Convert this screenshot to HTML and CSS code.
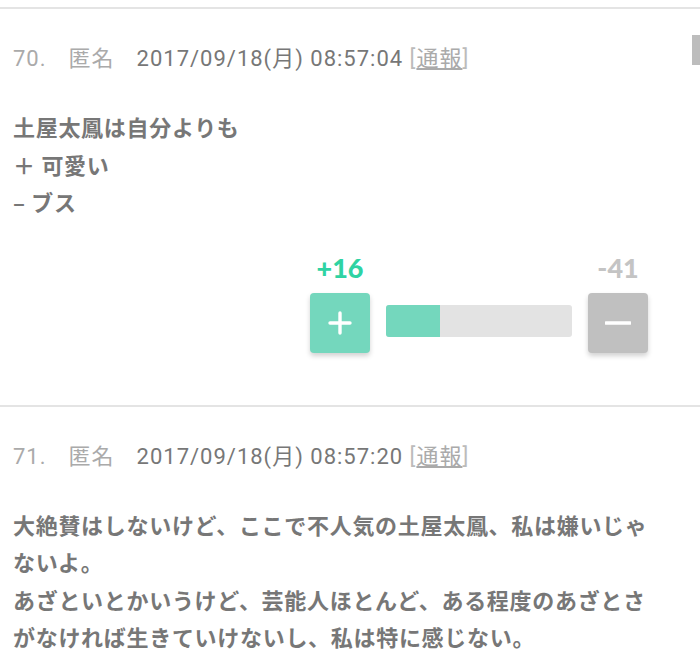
FILE: index.html
```html
<!DOCTYPE html>
<html lang="ja">
<head>
  <meta charset="UTF-8" />
  <meta name="viewport" content="width=device-width, initial-scale=1.0"/>
  <title>コメント</title>
  <link rel="stylesheet" href="styles.css">
</head>
<body>

  <div class="comments">
    <div class="post">
      <div class="post-head">
        <span class="num">70.</span><span class="name">匿名</span><span class="date">2017/09/18(月) 08:57:04</span>
        <span class="report">[<a href="#">通報</a>]</span>
      </div>
      <div class="post-body">
        土屋太鳳は自分よりも<br />
        ＋ 可愛い<br />
        – ブス
      </div>
      <div class="votes">
        <div class="count plus">+16</div>
        <div></div>
        <div class="count minus">-41</div>
        <button class="vote-btn plus-btn">
          <svg width="26" height="26" viewBox="0 0 26 26"><path d="M13 3v20M3 13h20" stroke="#fff" stroke-width="3.4" stroke-linecap="round" fill="none"/></svg>
        </button>
        <div class="bar"><div class="bar-fill" style="width: 29%"></div></div>
        <button class="vote-btn minus-btn">
          <svg width="26" height="26" viewBox="0 0 26 26"><path d="M1 13h24" stroke="#fff" stroke-width="3.4" stroke-linecap="round" fill="none"/></svg>
        </button>
      </div>
    </div>

    <div class="post">
      <div class="post-head">
        <span class="num">71.</span><span class="name">匿名</span><span class="date">2017/09/18(月) 08:57:20</span>
        <span class="report">[<a href="#">通報</a>]</span>
      </div>
      <div class="post-body">
        大絶賛はしないけど、ここで不人気の土屋太鳳、私は嫌いじゃないよ。<br />
        あざといとかいうけど、芸能人ほとんど、ある程度のあざとさがなければ生きていけないし、私は特に感じない。
      </div>
    </div>
  </div>

  <div class="scroll-thumb"></div>

</body>
</html>
```

FILE: styles.css
```css
body {
  margin: 0;
  font-family: Roboto, "Noto Sans CJK JP", sans-serif;
  background: #fff;
  color: #777;
  overflow: hidden;
}

.comments {
  margin-top: 7px;
}

.post {
  border-top: 2px solid #e4e4e4;
  padding: 35px 13px 0 13px;
}

.post-head {
  font-size: 22px;
  line-height: 30px;
  letter-spacing: 1px;
  color: #aaa;
  white-space: nowrap;
}

.post-head .num,
.post-head .name {
  margin-right: 22px;
}

.post-head .date {
  color: #777;
}

.post-head .report {
  color: #bbb;
}

.post-head .report a {
  color: #aaa;
  text-decoration: underline;
}

.post-body {
  margin-top: 34px;
  max-width: 650px;
  font-family: "Noto Sans CJK JP", sans-serif;
  font-weight: bold;
  font-size: 22px;
  letter-spacing: 0.7px;
  line-height: 37.5px;
  color: #777;
}

.votes {
  display: grid;
  grid-template-columns: 60px 186px 60px;
  column-gap: 16px;
  align-items: center;
  justify-content: end;
  margin: 27px 39px 0 0;
  padding-bottom: 52px;
}

.count {
  font-family: Lato, sans-serif;
  font-weight: 900;
  font-size: 27px;
  line-height: 40px;
  text-align: center;
  margin-bottom: 5px;
}

.count.plus {
  color: #2fd3a3;
}

.count.minus {
  color: #c4c4c4;
}

.vote-btn {
  width: 60px;
  height: 60px;
  border: none;
  border-radius: 4px;
  padding: 0;
  display: flex;
  align-items: center;
  justify-content: center;
  cursor: pointer;
  box-shadow: 0 3px 5px rgba(0, 0, 0, 0.18);
}

.plus-btn {
  background: #74d7bd;
}

.minus-btn {
  background: #c0c0c0;
}

.bar {
  height: 32px;
  margin-bottom: 4px;
  background: #e3e3e3;
  border-radius: 3px;
  overflow: hidden;
}

.bar-fill {
  height: 100%;
  background: #74d7bd;
}

.scroll-thumb {
  position: fixed;
  top: 35px;
  right: 0;
  width: 8px;
  height: 30px;
  background: #bdbdbd;
}
```
